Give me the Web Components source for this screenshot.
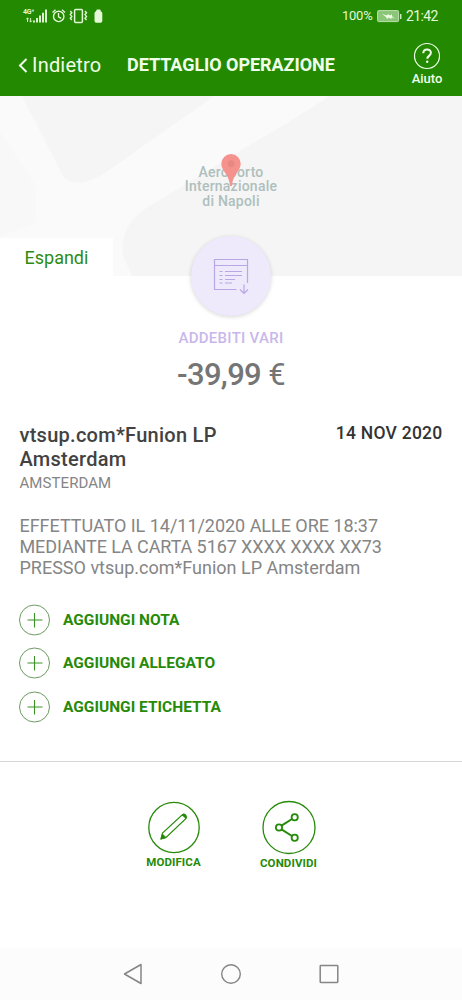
<!DOCTYPE html>
<html lang="it">
<head>
<meta charset="utf-8">
<title>Dettaglio operazione</title>
<style>
html,body{margin:0;padding:0;background:#fff}
body{width:462px;height:1000px;overflow:hidden;font-family:Roboto,sans-serif;color:#444}
</style>
</head>
<body>
<operation-page></operation-page>
<script>
const define = (name, html) => customElements.define(name, class extends HTMLElement {
  constructor() {
    super();
    this.attachShadow({ mode: 'open' }).innerHTML = '<style>*{box-sizing:border-box}svg{display:block;flex:none}</style>' + html;
  }
});

define('status-bar', `
<style>
:host{display:flex;height:32px;align-items:center;color:#e4f8d8;font-size:14px;line-height:16px}
svg{margin-left:22px}
.pct{margin-left:auto;width:31px;font-size:13px;letter-spacing:-.25px;white-space:nowrap}
.bat{margin:0 0 0 4px}
.time{margin:0 24px 0 4px;width:32px;font-size:14px;letter-spacing:-.6px;white-space:nowrap}
.net{position:absolute;left:23px;top:8px;font-size:7px;line-height:8px;font-weight:700;letter-spacing:-.2px}
</style>
<span class="net">4G⁺</span>
<svg width="84" height="20" viewBox="22 6 84 20" fill="none" stroke="#e4f8d8">
<path d="M27.500 22v-4m-1.200 1.300 1.200-1.500 1.200 1.500M30.600 18v4m-1.200-1.300 1.200 1.400 1.200-1.400" stroke-width=".9"/>
<path d="M34 22.500v-2M37 22.500v-4.500M40 22.500v-7M43 22.500v-9.800M46 22.500V9.500" stroke-width="1.900"/>
<circle cx="58.700" cy="16.400" r="5.200" stroke-width="1.400"/>
<path d="M58.500 13v3.800l2.700 1.600M52.500 12.400l3-2.700M65 12.400l-3-2.700" stroke-width="1.300"/>
<rect x="74.600" y="9.600" width="7.800" height="12.800" rx="1" stroke-width="1.500"/>
<path d="m70.300 11 1.500 1.800-1.500 1.800 1.500 1.800-1.500 1.800 1.500 1.800M85 11l1.500 1.800-1.500 1.800 1.500 1.800-1.500 1.800 1.500 1.800" stroke-width="1.400"/>
<path d="M97 9.600h3q.7 0 .7 1.700 1.600.5 1.600 2V21q0 1.800-1.800 1.800h-4.200Q94.500 22.800 94.500 21v-7.700q0-1.500 1.700-2 0-1.700.8-1.700z" fill="#e4f8d8" stroke="none"/>
</svg>
<span class="pct">100%</span>
<svg class="bat" width="25" height="14" viewBox="0 0 25 14"><rect x=".6" y="1.600" width="21" height="11" rx="1" fill="#8bc578" stroke="#bce0ac"/><path d="m5 5 5 1.400 1-1.400 2 1.400 2-1.200v2l3 2.300-3-1-1 1.500-2-1.500-2 1.500-1-2z" fill="#ecffe5"/><path d="M23.700 5v5" stroke="#c8edb9" stroke-width="1.500"/></svg>
<span class="time">21:42</span>`);

define('app-header', `
<style>
:host{display:block;height:96px;background:#238900;color:#f0ffe9;position:relative}
.bar{display:flex;height:64px;align-items:flex-start;padding-left:18px}
.back{display:flex;width:109px;padding-top:21px;font-size:20px;line-height:24px;gap:4px;letter-spacing:.2px;white-space:nowrap}
.back svg{margin-top:5px}
h1{margin:22px 0 0;font-size:18px;line-height:22px;font-weight:700;letter-spacing:-.05px;white-space:nowrap}
.help{margin-left:auto;width:70px;padding-top:10px;display:flex;flex-direction:column;align-items:center;font-weight:500;font-size:13px;line-height:15px}
.help svg{margin-bottom:1px}
</style>
<status-bar></status-bar>
<div class="bar"><div class="back"><svg width="10" height="15" viewBox="0 0 10 15"><path d="M8.500 1 2 7.500 8.500 14" fill="none" stroke="currentColor" stroke-width="2"/></svg><span>Indietro</span></div>
<h1>DETTAGLIO OPERAZIONE</h1>
<div class="help"><svg width="28" height="28" viewBox="0 0 28 28" fill="none" stroke="currentColor"><circle cx="14" cy="14" r="12.500" stroke-width="1.200"/><path d="M10.300 11.200c0-5 7.600-4.900 7.600-.4 0 3-3.700 3.100-3.700 6" stroke-width="2"/><circle cx="14.200" cy="19.700" r="1.200" fill="currentColor" stroke="none"/></svg><span>Aiuto</span></div></div>`);

define('map-preview', `
<style>
:host{display:grid;height:180px;overflow:hidden;background:#f5f5f5}
:host>*{grid-area:1/1}
.place{justify-self:center;margin-top:69px;height:44px;text-align:center;font-size:14px;line-height:14.300px;font-weight:500;color:#afbfbd;letter-spacing:.23px;white-space:nowrap}
.pin{justify-self:center;margin-top:58px;z-index:1}
.expand{align-self:end;width:113px;height:38px;padding:9px 0 0 24.500px;background:#fff;color:#2e8b12;font-size:18px;line-height:22px}
</style>
<svg width="462" height="180" viewBox="0 0 462 180"><path d="M0 0h22l42 82q16 12 44-7L214 0h115Q300 20 248 50L145 113q-23 14-23 44l10 23H0z" fill="#fafafa"/><path d="M0 36 36 90v37L0 140z" fill="#f8f8f8"/></svg>
<div class="place">Aeroporto<br>Internazionale<br>di Napoli</div>
<svg class="pin" width="20" height="34" viewBox="0 0 20 34"><path d="M10 0a9.700 9.700 0 0 0-9.700 9.800C.3 17 8 20 9 31.500q1 1.500 2 0C12 20 19.700 17 19.700 9.800A9.700 9.700 0 0 0 10 0Z" fill="#f5928d"/><circle cx="10" cy="9.800" r="3.500" fill="#e88884"/></svg>
<span class="expand">Espandi</span>`);

define('category-summary', `
<style>
:host{display:flex;flex-direction:column;align-items:center;height:147px;position:relative}
.disc{display:flex;align-items:center;justify-content:center;margin-top:-40px;width:80px;height:80px;flex:none;border-radius:50%;background:#eeeafb;box-shadow:0 1px 4px #0000002b}
.cat{margin-top:12px;color:#c8b8ea;font-size:15px;line-height:20px;font-weight:500;letter-spacing:.28px;white-space:nowrap}
.amount{margin-top:8px;color:#757575;font-size:31px;line-height:38px;font-weight:500;letter-spacing:-.65px;white-space:nowrap}
.eur{font-weight:400}
</style>
<div class="disc"><svg width="40" height="40" viewBox="0 0 40 40" fill="none" stroke="#b9a6e5"><path d="M36.500 27V3.500h-33v30h22M3.500 9.500h33M33 28.500v9m-4-4 4 4 4-4" stroke-width="1.200"/><path d="M8.500 15.500h3m2.500 0h17M8.500 19.500h3m2.500 0h17M8.500 23.500h3m2.500 0h10M8.500 27h3m2.500 0h7" stroke-width="1.200"/></svg></div>
<div class="cat">ADDEBITI VARI</div>
<div class="amount">-39,99 <span class="eur">€</span></div>`);

define('operation-info', `
<style>
:host{display:block;height:176px;padding:0 19.500px}
.top{display:flex;justify-content:space-between}
h2{margin:0;font-size:20px;line-height:24px;font-weight:500;color:#424242;letter-spacing:.27px;white-space:nowrap}
time{font-size:17.500px;line-height:21px;font-weight:500;color:#333;letter-spacing:.25px;white-space:nowrap}
.city{margin-top:3px;font-size:15px;line-height:18px;letter-spacing:.08px;color:#858585}
p{margin:23px 0 0;font-size:18px;line-height:21px;color:#858585;white-space:nowrap}
.narrow{letter-spacing:-.09px}
</style>
<div class="top"><h2>vtsup.com*Funion LP<br>Amsterdam</h2><time>14 NOV 2020</time></div>
<div class="city">AMSTERDAM</div>
<p><span style="letter-spacing:-.03px">EFFETTUATO IL 14/11/2020 ALLE ORE 18:37</span><br><span class="narrow">MEDIANTE LA CARTA 5167 XXXX XXXX XX73</span><br>PRESSO vtsup.com*Funion LP Amsterdam</p>`);

define('add-row', `
<style>
:host{display:flex;align-items:center;height:43.500px;gap:12px;padding-left:19px;color:#258a08;font-size:15.500px;line-height:20px;font-weight:700;white-space:nowrap}
</style>
<svg width="32" height="32" viewBox="0 0 32 32" fill="none"><circle cx="15.500" cy="16" r="15" stroke="#6b9a61"/><path d="M8.500 16h15M15.500 9v14.500" stroke="#3b9127" stroke-width="1.100"/></svg><span><slot></slot></span>`);

define('round-action', `
<style>
:host{display:flex;flex-direction:column;align-items:center;width:80px;color:#258a08;font-size:11.500px;line-height:14px;font-weight:700;letter-spacing:.1px;white-space:nowrap}
</style><slot name="icon"></slot><slot></slot>`);

define('action-bar', `
<style>
:host{display:flex;justify-content:center;gap:35px;height:187px;padding-top:36.500px;border-top:1.500px solid #d3d8d3}
svg{width:56px;height:56px}
round-action:last-child{padding-top:1px}
</style>
<round-action><svg slot="icon" viewBox="0 0 56 56" fill="none" stroke="#258a08"><circle cx="28" cy="28.500" r="25.200" stroke-width="1.300"/><path d="m15 40 1.500-6L36 16q4-1 4 3.500L20 38.500z" stroke-width="1.100"/><path d="m15 40 1.300-5 3.700 3.500zM36 16q1.500-2 3.500-.5 2 2 .5 4z" fill="#258a08" stroke-width=".8"/></svg>MODIFICA</round-action>
<round-action><svg slot="icon" viewBox="0 0 56 56" fill="none" stroke="#258a08"><circle cx="28" cy="27.500" r="26" stroke-width="1.300"/><path d="m20.500 25.700 10.500-6.700M20.500 29.300l10.500 6.700" stroke-width="2"/><g stroke-width="1.800"><circle cx="18" cy="27.500" r="3.100"/><circle cx="33.700" cy="17.300" r="3.100"/><circle cx="33.700" cy="37.700" r="3.100"/></g></svg>CONDIVIDI</round-action>`);

define('system-nav', `
<style>
:host{display:flex;justify-content:center;align-items:center;height:52px;gap:78px;background:#fcfcfc}
</style>
<svg width="20" height="24" viewBox="0 0 20 24"><path d="M18 2.500v19L1.500 12z" fill="none" stroke="#858585" stroke-width="1.500" stroke-linejoin="round"/></svg>
<svg width="20" height="24" viewBox="0 0 20 24"><circle cx="10" cy="12" r="9.300" fill="none" stroke="#858585" stroke-width="1.400"/></svg>
<svg width="20" height="24" viewBox="0 0 20 24"><rect x="1.200" y="3.500" width="17.600" height="17" rx=".7" fill="none" stroke="#858585" stroke-width="1.500"/></svg>`);

define('operation-page', `
<style>
:host{display:flex;flex-direction:column;width:462px;height:1000px}
.adds{height:162px;margin-top:-1px;padding-bottom:1px;box-sizing:content-box}
</style>
<app-header></app-header><map-preview></map-preview><category-summary></category-summary><operation-info></operation-info>
<div class="adds"><add-row>AGGIUNGI NOTA</add-row><add-row>AGGIUNGI ALLEGATO</add-row><add-row>AGGIUNGI ETICHETTA</add-row></div>
<action-bar></action-bar><system-nav></system-nav>`);
</script>
</body>
</html>
